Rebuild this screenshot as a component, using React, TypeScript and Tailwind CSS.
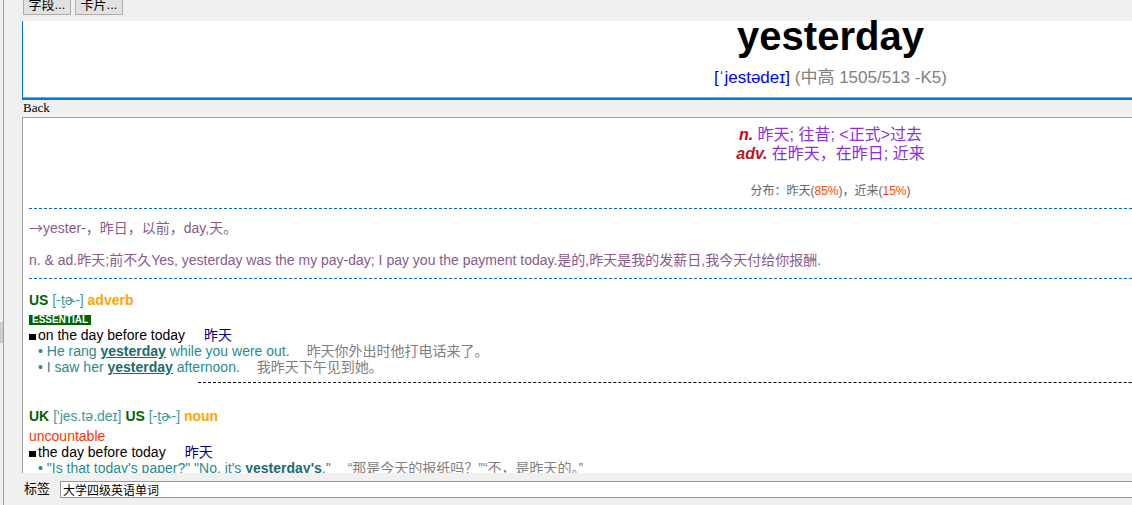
import React from "react";

const Bullet = () => <span className="mr-[2px] inline-block h-[6px] w-[7px] bg-black" />;

const Example = ({ children, zh }: { children: React.ReactNode; zh: string }) => (
  <div className="pl-[9px] text-[14px] leading-[16px] text-[#2a8b8b] whitespace-nowrap">
    • {children}
    <span className="ml-[17px] text-[#808080]">{zh}</span>
  </div>
);

const Hl = ({ children, underline = true }: { children: React.ReactNode; underline?: boolean }) => (
  <b className={underline ? "text-[#1b6b6b] underline" : "text-[#1b6b6b]"}>{children}</b>
);

function Toolbar() {
  return (
    <div className="flex h-[21px] shrink-0 items-end gap-[4px] pb-[6px] pl-px">
      <button className="h-[22px] w-[48px] border border-[#adadad] bg-[#e1e1e1] text-[13px] leading-none text-black">
        字段...
      </button>
      <button className="h-[22px] w-[48px] border border-[#adadad] bg-[#e1e1e1] text-[13px] leading-none text-black">
        卡片...
      </button>
    </div>
  );
}

function FrontField() {
  return (
    <div className="shrink-0 border-b-2 border-l border-[#0078d7]">
      <div className="h-[77px] border-b border-[#a0a0a0] bg-white text-center">
        <div className="text-[40px] font-bold leading-[30px] text-black">yesterday</div>
        <div className="mt-[17px] text-[17px] leading-[20px]">
          <span className="text-[#0000ff]">[ˈjestədeɪ]</span>
          <span className="text-[#808080]"> (中高 1505/513 -K5)</span>
        </div>
      </div>
    </div>
  );
}

function BackField() {
  return (
    <div className="h-[356px] shrink-0 overflow-hidden border-l border-t border-[#a0a0a0] bg-white px-[6px]">
      <div className="pt-[7px] text-center text-[16px] leading-[19px] text-[#8e2de2]">
        <div>
          <b className="italic text-[#cc0000]">n.</b> 昨天; 往昔; &lt;正式&gt;过去
        </div>
        <div>
          <b className="italic text-[#b8151b]">adv.</b> 在昨天，在昨日; 近来
        </div>
      </div>
      <div className="mt-[20px] text-center text-[12px] leading-[16px] text-[#666666]">
        分布：昨天(<span className="text-[#ff4500]">85%</span>)，近来(<span className="text-[#ff4500]">15%</span>)
      </div>

      <div className="mt-[9px] border-t border-dashed border-[#0066cc]" />
      <div className="pt-[11px] text-[14px] leading-[16px] text-[#8a5a8a] whitespace-nowrap">
        <div className="h-[16px]">
          <span className="font-['Noto_Sans_CJK_SC',sans-serif] leading-none">→</span>yester-，昨日，以前，day,天。
        </div>
        <div className="mt-[16px]">
          n. &amp; ad.昨天;前不久Yes, yesterday was the my pay-day; I pay you the payment today.是的,昨天是我的发薪日,我今天付给你报酬.
        </div>
      </div>
      <div className="mt-[10px] border-t border-dashed border-[#0066cc]" />

      <div className="pt-[13px] text-[14px] leading-[16px] whitespace-nowrap">
        <div>
          <b className="text-[#006400]">US</b> <span className="text-[#3a9a9a]">[-t̬ɚ-]</span>{" "}
          <b className="text-[#ffa500]">adverb</b>
        </div>
        <div className="mt-[7px] mb-[2px] flex">
          <span className="h-[10px] bg-[#006400] px-[3px] text-[10px] font-bold leading-[10px] text-white">ESSENTIAL</span>
        </div>
        <div className="text-black">
          <Bullet />
          on the day before today<span className="ml-[19px] text-[#000080]">昨天</span>
        </div>
        <Example zh="昨天你外出时他打电话来了。">
          He rang <Hl>yesterday</Hl> while you were out.
        </Example>
        <Example zh="我昨天下午见到她。">
          I saw her <Hl>yesterday</Hl> afternoon.
        </Example>
        <div className="ml-[169px] mt-[7px] border-t border-dashed border-black" />

        <div className="mt-[25px]">
          <b className="text-[#006400]">UK</b> <span className="text-[#3a9a9a]">['jes.tə.deɪ]</span>{" "}
          <b className="text-[#006400]">US</b> <span className="text-[#3a9a9a]">[-t̬ɚ-]</span>{" "}
          <b className="text-[#ffa500]">noun</b>
        </div>
        <div className="mt-[4px] text-[#ff3300]">uncountable</div>
        <div className="text-black">
          <Bullet />
          the day before today<span className="ml-[19px] text-[#000080]">昨天</span>
        </div>
        <Example zh="“那是今天的报纸吗？”“不，是昨天的。”">
          "Is that today's paper?" "No, it's <Hl underline={false}>yesterday's</Hl>."
        </Example>
      </div>
    </div>
  );
}

function TagBar() {
  return (
    <div className="flex flex-1 items-center pl-[2px]">
      <span className="text-[13px] leading-[16px] text-black">标签</span>
      <input
        readOnly
        defaultValue="大学四级英语单词"
        className="ml-[10px] h-[17px] flex-1 border border-[#999999] bg-white px-[2px] text-[12px] leading-[15px] text-black outline-none"
      />
    </div>
  );
}

export default function App() {
  return (
    <div className="flex h-[505px] w-[1132px] overflow-hidden bg-[#f0f0f0] font-['Liberation_Sans','Noto_Sans_CJK_SC',sans-serif]">
      <div className="relative w-[3px] shrink-0">
        <div className="absolute left-0 top-[322px] h-[21px] w-[3px] bg-[#cdcdcd]" />
      </div>
      <div className="w-px shrink-0 bg-[#a0a0a0]" />
      <div className="w-[18px] shrink-0" />
      <div className="flex w-[1616px] shrink-0 flex-col">
        <Toolbar />
        <FrontField />
        <div className="h-[17px] shrink-0 pl-px font-['Liberation_Serif',serif] text-[13px] leading-[15px] text-black">
          Back
        </div>
        <BackField />
        <TagBar />
      </div>
    </div>
  );
}
